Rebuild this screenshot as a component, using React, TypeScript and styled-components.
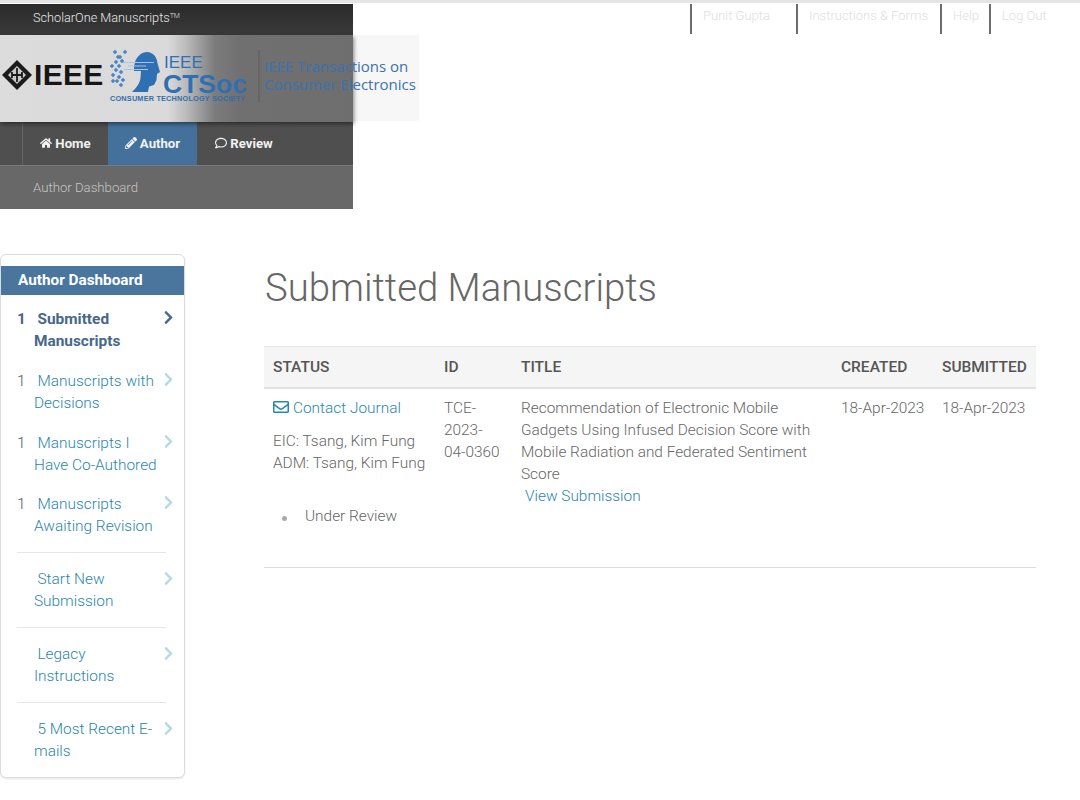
import React from "react";
import styled, { createGlobalStyle } from "styled-components";
import { FaHome, FaPencilAlt, FaRegComment, FaChevronRight, FaRegEnvelope } from "react-icons/fa";

const Global = createGlobalStyle`
  html, body { margin: 0; padding: 0; background: #fff; }
  body { font-family: Roboto, "Liberation Sans", sans-serif; color: #666; }
  * { box-sizing: border-box; }
`;

const Page = styled.div`
  width: 1080px;
  height: 800px;
  overflow: hidden;
  border-top: 3px solid #e4e4e4;
  position: relative;
`;

const TopRow = styled.div`
  display: flex;
  align-items: flex-start;
  padding-top: 1px;
`;

const HeaderPanel = styled.header`
  width: 353px;
  flex: none;
`;

const BrandBar = styled.div`
  height: 31px;
  background: linear-gradient(#2a2a2a, #3a3a3a);
  color: #e8e8e8;
  font-size: 12.7px;
  font-weight: 300;
  line-height: 28px;
  padding-left: 33px;
  sup { font-size: 7px; vertical-align: 4px; line-height: 0; }
`;

const LogoStrip = styled.div`
  position: relative;
  width: 419px;
  height: 86px;
  background: #f7f7f7;
  display: flex;
  align-items: center;
`;

const LogoShade = styled.div`
  position: absolute;
  left: 0;
  top: 0;
  width: 353px;
  height: 87px;
  background: linear-gradient(90deg, #dcdcdc 0, #dadada 168px, #bdbdbd 185px, #7c7c7c 215px, #707070 240px, #6e6e6e 353px);
  box-shadow: 1px 2px 4px rgba(0, 0, 0, 0.45);
`;

const LogoContent = styled.div`
  position: relative;
  display: flex;
  align-items: center;
  height: 100%;
  width: 100%;
`;

const IeeeMark = styled.div`
  display: flex;
  align-items: center;
  width: 110px;
  padding-left: 2px;
  gap: 2px;
  margin-top: -7px;
  flex: none;
  color: #161616;
  font-family: "Liberation Sans", Arial, sans-serif;
  font-weight: 700;
  font-size: 30px;
  letter-spacing: 0.3px;
  line-height: 1;
`;

const CtsocBlock = styled.div`
  width: 148px;
  height: 100%;
  display: flex;
  flex-direction: column;
  flex: none;
`;

const CtsocTop = styled.div`
  display: flex;
  margin-top: 13px;
  gap: 3px;
`;

const CtsocWords = styled.div`
  display: flex;
  flex-direction: column;
  color: #2f70b5;
  font-family: "Liberation Sans", Arial, sans-serif;
  line-height: 1;
`;

const CtsocSmall = styled.span`
  font-size: 17px;
  margin: 6px 0 0 1px;
`;

const CtsocBig = styled.span`
  font-size: 26.5px;
  font-weight: 700;
  line-height: 22px;
  margin-top: 2px;
  white-space: nowrap;
`;

const CtsocCaption = styled.span`
  color: #2f6fae;
  font-family: "Liberation Sans", Arial, sans-serif;
  font-size: 7.3px;
  line-height: 8px;
  font-weight: 700;
  white-space: nowrap;
  letter-spacing: 0.2px;
`;

const LogoRule = styled.div`
  width: 2px;
  height: 53px;
  background: #666;
  margin: -4px 4px 0 0;
  flex: none;
`;

const JournalName = styled.div`
  color: #3a72b2;
  font-family: "Open Sans", sans-serif;
  font-size: 15px;
  line-height: 18px;
  white-space: nowrap;
  margin: -7px 0 0 0;
`;

const MainNav = styled.nav`
  height: 45px;
  background: #4f4f4f;
  display: flex;
  padding-left: 22px;
  border-bottom: 1px solid #7a7a7a;
`;

const NavItem = styled.div<{ $active?: boolean; $first?: boolean; $width: number }>`
  width: ${(p) => p.$width}px;
  display: flex;
  align-items: center;
  justify-content: center;
  gap: 3px;
  color: #f2f2f2;
  font-size: 13.2px;
  font-weight: 700;
  background: ${(p) => (p.$active ? "#44719b" : "transparent")};
  border-left: ${(p) => (p.$first ? "1px solid #656565" : "none")};
  svg { font-size: 12px; }
`;

const SubNav = styled.div`
  height: 43px;
  background: #686868;
  color: #c5c5c5;
  font-size: 13.2px;
  font-weight: 300;
  line-height: 43px;
  padding-left: 33px;
`;

const Utility = styled.div`
  display: flex;
  margin-left: 337px;
`;

const UtilityLink = styled.div<{ $width: number }>`
  width: ${(p) => p.$width}px;
  height: 30px;
  border-left: 2px solid #6d6d6d;
  color: #e0e0e0;
  font-size: 13px;
  font-weight: 300;
  line-height: 24px;
  padding-left: 11px;
  white-space: nowrap;
`;

const Body = styled.div`
  display: flex;
  align-items: flex-start;
  padding-top: 45px;
`;

const Sidebar = styled.aside`
  width: 185px;
  height: 524px;
  flex: none;
  background: #fff;
  border: 1px solid #dcdcdc;
  border-radius: 6px;
  box-shadow: 0 1px 2px rgba(0, 0, 0, 0.1);
  padding-top: 11px;
`;

const SideTitle = styled.div`
  height: 29px;
  background: #4a769e;
  color: #fff;
  font-size: 15.3px;
  font-weight: 700;
  line-height: 29px;
  padding-left: 17px;
`;

const SideList = styled.div`
  padding: 13px 11px 0 16px;
`;

const SideItem = styled.div<{ $rule?: boolean; $gap: number }>`
  position: relative;
  margin-top: ${(p) => p.$gap}px;
  padding: ${(p) => (p.$rule ? "15px" : "0")} 20px 0 17px;
  border-top: ${(p) => (p.$rule ? "1px solid #e6e6e6" : "none")};
  width: 149px;
  font-size: 15.4px;
  line-height: 22px;
  font-weight: 300;
`;

const SideText = styled.div<{ $active?: boolean }>`
  width: 124px;
  margin-right: -10px;
  text-indent: 3.5px;
  font-weight: ${(p) => (p.$active ? 700 : 300)};
  color: ${(p) => (p.$active ? "#47688a" : "#2a86aa")};
`;

const Count = styled.span<{ $active?: boolean }>`
  position: absolute;
  left: 0;
  top: 0;
  font-weight: ${(p) => (p.$active ? 700 : 300)};
  color: ${(p) => (p.$active ? "#47688a" : "#555")};
`;

const Chevron = styled.span<{ $active?: boolean; $rule?: boolean }>`
  position: absolute;
  left: 144px;
  top: ${(p) => (p.$rule ? 18 : 2)}px;
  font-size: 15px;
  line-height: 1;
  color: ${(p) => (p.$active ? "#47698d" : "#b5d8e6")};
`;

const Main = styled.main`
  width: 772px;
  margin-left: 79px;
`;

const Title = styled.h1`
  margin: 11px 0 35px;
  font-size: 38.3px;
  line-height: 46px;
  font-weight: 300;
  color: #666;
  padding-left: 1px;
`;

const Table = styled.table`
  width: 772px;
  table-layout: fixed;
  border-collapse: collapse;
  font-size: 15.4px;
  line-height: 22px;
  font-weight: 300;
  color: #666;
`;

const Th = styled.th<{ $width: number }>`
  width: ${(p) => p.$width}px;
  height: 41px;
  padding: 0 0 0 9px;
  text-align: left;
  background: #f5f5f5;
  border-top: 1px solid #e6e6e6;
  border-bottom: 2px solid #e2e2e2;
  font-size: 15.5px;
  font-weight: 500;
  color: #555;
`;

const Td = styled.td`
  vertical-align: top;
  padding: 8px 9px 0;
  height: 180px;
  border-bottom: 1px solid #ddd;
`;

const DateCell = styled(Td)`
  white-space: nowrap;
`;

const Link = styled.a`
  color: #2a86aa;
  font-weight: 300;
  svg { color: #2a86ad; vertical-align: -2px; font-size: 16px; margin-right: 4px; }
`;

const ViewLink = styled(Link)`
  display: block;
  padding-left: 4px;
`;

const Editors = styled.div`
  margin-top: 11px;
  white-space: nowrap;
`;

const StatusLine = styled.ul`
  margin: 31px 0 0;
  padding: 0 0 0 32px;
  list-style: none;
  position: relative;
`;

const Dot = styled.span`
  position: absolute;
  left: 9px;
  top: 11px;
  width: 5px;
  height: 5px;
  border-radius: 50%;
  background: #aaa;
`;

const items = [
  { c: "1", t: "Submitted Manuscripts", active: true, gap: 0 },
  { c: "1", t: "Manuscripts with Decisions", gap: 18 },
  { c: "1", t: "Manuscripts I Have Co-Authored", gap: 18 },
  { c: "1", t: "Manuscripts Awaiting Revision", gap: 17 },
  { c: "", t: "Start New Submission", rule: true, gap: 15 },
  { c: "", t: "Legacy Instructions", rule: true, gap: 15 },
  { c: "", t: "5 Most Recent E-mails", rule: true, gap: 15 },
];

const Diamond = () => (
  <svg width="30" height="30" viewBox="0 0 30 30">
    <path d="M15 0 L30 15 L15 30 L0 15 Z" fill="#1b1b1b" />
    <path d="M15 6 L24 15 L15 24 L6 15 Z" fill="#c9c9c9" />
    <path d="M15 8 V22 M10 12 V18 M20 12 V18 M10 15 H20" stroke="#1b1b1b" strokeWidth="1.8" fill="none" />
  </svg>
);

const dna: [number, number][] = [
  [5, 4], [15, 4], [10, 9], [6, 14], [2, 18], [6, 22], [3, 27], [9, 29], [3, 33], [11, 37],
  [12, 13], [9, 18], [11, 24], [7, 33], [13, 32], [8, 9],
];

const Head = () => (
  <svg width="50" height="47" viewBox="0 0 50 47" style={{ flex: "none" }}>
    <path d="M25 14 C27 8 32 4 37 4 C43 4 47 9 47.5 15.3 L50 24 L47 26 L46.5 32 L44 37 L39 38.5 L38 44 L22 44 C27 39 30 35 30.5 30 L31 23 L24 23 L24 19 Z" fill="#2f70b5" />
    <path d="M12 14.5 H44 M18 18 H36 M14 21.5 H38" stroke="#a9c4e2" strokeWidth="1.2" fill="none" />
    <g fill="#4a86c5">
      {dna.map(([x, y]) => (
        <rect key={`${x}-${y}`} x={x - 1.6} y={y - 1.6} width="3.2" height="3.2" transform={`rotate(45 ${x} ${y})`} />
      ))}
    </g>
  </svg>
);

export default function App() {
  return (
    <Page>
      <Global />
      <TopRow>
        <HeaderPanel>
          <BrandBar>ScholarOne Manuscripts<sup>TM</sup></BrandBar>
          <LogoStrip>
            <LogoShade />
            <LogoContent>
              <IeeeMark><Diamond />IEEE</IeeeMark>
              <CtsocBlock>
                <CtsocTop>
                  <Head />
                  <CtsocWords>
                    <CtsocSmall>IEEE</CtsocSmall>
                    <CtsocBig>CTSoc</CtsocBig>
                  </CtsocWords>
                </CtsocTop>
                <CtsocCaption>CONSUMER TECHNOLOGY SOCIETY</CtsocCaption>
              </CtsocBlock>
              <LogoRule />
              <JournalName>IEEE Transactions on<br />Consumer Electronics</JournalName>
            </LogoContent>
          </LogoStrip>
          <MainNav>
            <NavItem $first $width={86}><FaHome />Home</NavItem>
            <NavItem $active $width={89}><FaPencilAlt />Author</NavItem>
            <NavItem $width={94}><FaRegComment />Review</NavItem>
          </MainNav>
          <SubNav>Author Dashboard</SubNav>
        </HeaderPanel>
        <Utility>
          <UtilityLink $width={106}>Punit Gupta</UtilityLink>
          <UtilityLink $width={144}>Instructions &amp; Forms</UtilityLink>
          <UtilityLink $width={49}>Help</UtilityLink>
          <UtilityLink $width={60}>Log Out</UtilityLink>
        </Utility>
      </TopRow>
      <Body>
        <Sidebar>
          <SideTitle>Author Dashboard</SideTitle>
          <SideList>
            {items.map((it) => (
              <SideItem key={it.t} $rule={it.rule} $gap={it.gap}>
                {it.c && <Count $active={it.active}>{it.c}</Count>}
                <SideText $active={it.active}>{it.t}</SideText>
                <Chevron $active={it.active} $rule={it.rule}><FaChevronRight /></Chevron>
              </SideItem>
            ))}
          </SideList>
        </Sidebar>
        <Main>
          <Title>Submitted Manuscripts</Title>
          <Table>
            <thead>
              <tr>
                <Th $width={171}>STATUS</Th>
                <Th $width={77}>ID</Th>
                <Th $width={320}>TITLE</Th>
                <Th $width={101}>CREATED</Th>
                <Th $width={103}>SUBMITTED</Th>
              </tr>
            </thead>
            <tbody>
              <tr>
                <Td>
                  <Link><FaRegEnvelope />Contact Journal</Link>
                  <Editors>EIC: Tsang, Kim Fung<br />ADM: Tsang, Kim Fung</Editors>
                  <StatusLine><li><Dot />Under Review</li></StatusLine>
                </Td>
                <Td>TCE-2023-04-0360</Td>
                <Td>
                  Recommendation of Electronic Mobile Gadgets Using Infused Decision Score with Mobile Radiation and Federated Sentiment Score
                  <ViewLink>View Submission</ViewLink>
                </Td>
                <DateCell>18-Apr-2023</DateCell>
                <DateCell>18-Apr-2023</DateCell>
              </tr>
            </tbody>
          </Table>
        </Main>
      </Body>
    </Page>
  );
}
